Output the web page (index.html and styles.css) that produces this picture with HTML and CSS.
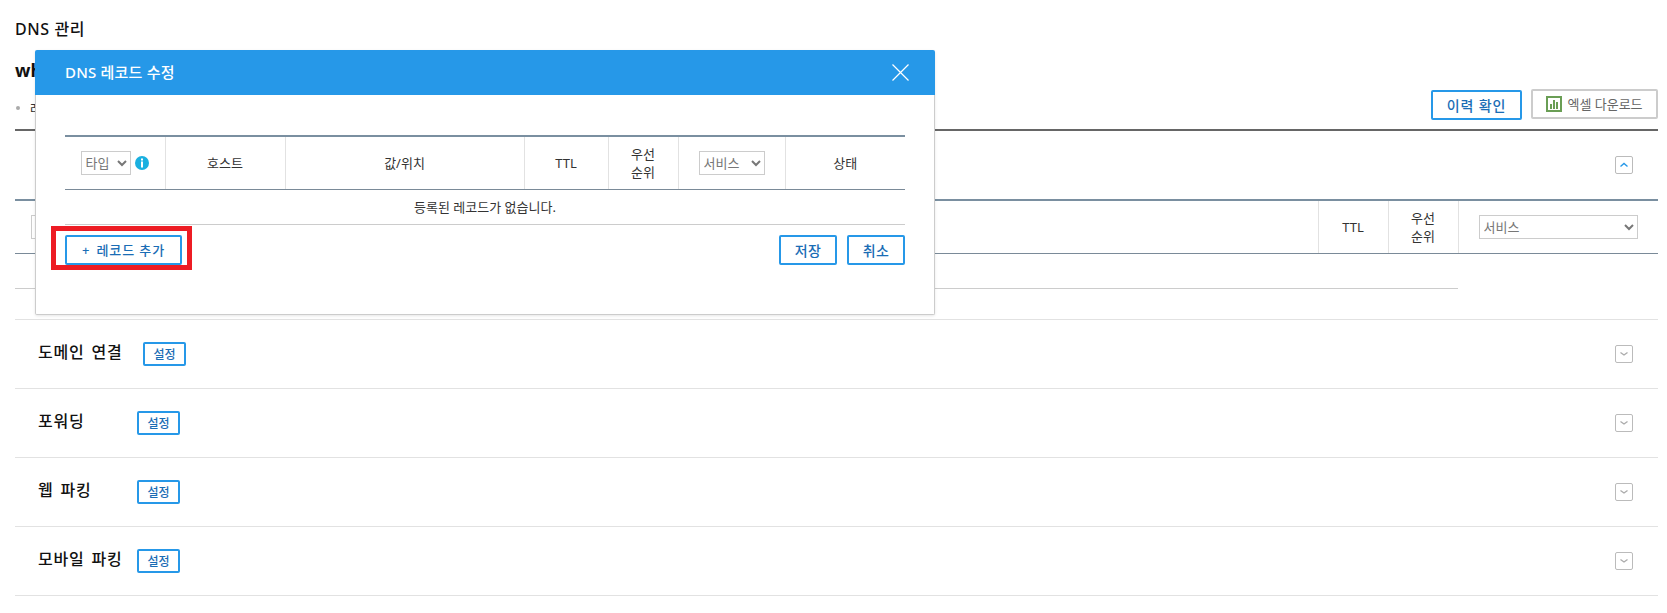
FILE: index.html
```html
<!DOCTYPE html>
<html lang="ko">
<head>
    <meta charset="UTF-8">
    <meta name="viewport" content="width=device-width, initial-scale=1.0">
    <title>DNS 관리</title>
    <link rel="stylesheet" href="styles.css">
</head>
<body>
    <div class="page">
        <h1 class="page-title">DNS 관리</h1>
        <h2 class="domain-name">whois</h2>
        <div class="toolbar">
            <p class="note">레코드를 확인하고 수정할 수 있습니다.</p>
            <div class="toolbar-buttons">
                <button class="btn btn-history">이력 확인</button>
                <button class="btn-excel">
                    <svg class="excel-icon" width="16" height="16" viewBox="0 0 16 16">
                        <rect x="1" y="1" width="14" height="14" fill="#fff" stroke="#6a9e55" stroke-width="2"/>
                        <rect x="4" y="8" width="2" height="5" fill="#6a9e55"/>
                        <rect x="7" y="4" width="2" height="9" fill="#6a9e55"/>
                        <rect x="10" y="6" width="2" height="7" fill="#6a9e55"/>
                    </svg>
                    엑셀 다운로드
                </button>
            </div>
        </div>

        <div class="section-open">
            <div class="section-open-head">
                <span class="toggle toggle-up">
                    <svg width="12" height="8" viewBox="0 0 12 8"><path d="M2.5 5.5 L6 2.5 L9.5 5.5" fill="none" stroke="#2698e8" stroke-width="1.4"/></svg>
                </span>
            </div>
            <table class="record-table">
                <colgroup>
                    <col>
                    <col class="col-70">
                    <col class="col-70">
                    <col class="col-200">
                </colgroup>
                <tr>
                    <th class="cell-left"><input class="filter-input" type="text"></th>
                    <th>TTL</th>
                    <th>우선<br>순위</th>
                    <th class="cell-service">
                        <select class="select select-wide"><option>서비스</option></select>
                    </th>
                </tr>
            </table>
            <div class="empty-row"></div>
        </div>

        <div class="section-row section-row-wide">
            <span class="section-title">도메인 연결</span>
            <button class="btn btn-small">설정</button>
            <span class="toggle"><svg width="12" height="8" viewBox="0 0 12 8"><path d="M2.5 2.5 L6 5 L9.5 2.5" fill="none" stroke="#aaa" stroke-width="1.3"/></svg></span>
        </div>
        <div class="section-row">
            <span class="section-title">포워딩</span>
            <button class="btn btn-small">설정</button>
            <span class="toggle"><svg width="12" height="8" viewBox="0 0 12 8"><path d="M2.5 2.5 L6 5 L9.5 2.5" fill="none" stroke="#aaa" stroke-width="1.3"/></svg></span>
        </div>
        <div class="section-row">
            <span class="section-title">웹 파킹</span>
            <button class="btn btn-small">설정</button>
            <span class="toggle"><svg width="12" height="8" viewBox="0 0 12 8"><path d="M2.5 2.5 L6 5 L9.5 2.5" fill="none" stroke="#aaa" stroke-width="1.3"/></svg></span>
        </div>
        <div class="section-row">
            <span class="section-title">모바일 파킹</span>
            <button class="btn btn-small">설정</button>
            <span class="toggle"><svg width="12" height="8" viewBox="0 0 12 8"><path d="M2.5 2.5 L6 5 L9.5 2.5" fill="none" stroke="#aaa" stroke-width="1.3"/></svg></span>
        </div>
    </div>

    <!-- 레코드 수정 팝업 -->
    <div class="modal">
        <div class="modal-head">
            <span class="modal-title">DNS 레코드 수정</span>
            <svg class="modal-close" width="17" height="17" viewBox="0 0 17 17">
                <path d="M0.5 0.5 L16.5 16.5 M16.5 0.5 L0.5 16.5" stroke="#fff" stroke-width="1.2"/>
            </svg>
        </div>
        <div class="modal-body">
            <table class="modal-table">
                <colgroup>
                    <col class="col-type">
                    <col class="col-host">
                    <col class="col-value">
                    <col class="col-ttl">
                    <col class="col-priority">
                    <col class="col-service">
                    <col class="col-status">
                </colgroup>
                <tr>
                    <th>
                        <span class="type-cell">
                            <select class="select select-type"><option>타입</option></select>
                            <svg width="14" height="14" viewBox="0 0 14 14">
                                <circle cx="7" cy="7" r="7" fill="#1ab0e0"/>
                                <rect x="6" y="2.5" width="2" height="2" fill="#fff"/>
                                <rect x="6" y="5.5" width="2" height="6" fill="#fff"/>
                            </svg>
                        </span>
                    </th>
                    <th>호스트</th>
                    <th>값/위치</th>
                    <th>TTL</th>
                    <th>우선<br>순위</th>
                    <th><select class="select select-service"><option>서비스</option></select></th>
                    <th>상태</th>
                </tr>
                <tr>
                    <td colspan="7" class="empty-cell">등록된 레코드가 없습니다.</td>
                </tr>
            </table>
            <div class="modal-foot">
                <button class="btn btn-add"><span class="plus">+</span> 레코드 추가</button>
                <div class="modal-actions">
                    <button class="btn btn-action">저장</button>
                    <button class="btn btn-action">취소</button>
                </div>
                <div class="annotation"></div>
            </div>
        </div>
    </div>
</body>
</html>
```

FILE: styles.css
```css
* {
    box-sizing: border-box;
}
body {
    margin: 0;
    font-family: "Noto Sans", "Noto Sans CJK KR", sans-serif;
    font-size: 13px;
    color: #333;
    background: #fff;
}
button, select, input {
    font-family: inherit;
}
.page {
    padding: 0 9px 0 15px;
}
.page-title {
    margin: 0;
    padding-top: 18px;
    font-size: 16px;
    line-height: 22px;
    letter-spacing: 0.6px;
    font-weight: 500;
    color: #111;
}
.domain-name {
    margin: 18px 0 0;
    font-size: 18px;
    line-height: 24px;
    font-weight: 700;
    color: #111;
}
.toolbar {
    display: flex;
    justify-content: space-between;
    align-items: flex-start;
    height: 31px;
    margin: 7px 0 9px;
}
.note {
    margin: 10px 0 0;
    padding-left: 15px;
    font-size: 13px;
    line-height: 18px;
    position: relative;
}
.note::before {
    content: "";
    position: absolute;
    left: 1px;
    top: 7px;
    width: 4px;
    height: 4px;
    border-radius: 50%;
    background: #aaa;
}
.toolbar-buttons {
    display: flex;
    gap: 9px;
}
.btn {
    background: #fff;
    border: 2px solid #2698e8;
    border-radius: 2px;
    color: #1a6db5;
    font-weight: 500;
    padding: 0;
    cursor: pointer;
}
.btn-history {
    width: 91px;
    height: 30px;
    margin-top: 1px;
    font-size: 14px;
    letter-spacing: 0.9px;
}
.btn-excel {
    display: flex;
    align-items: center;
    justify-content: center;
    gap: 5px;
    width: 127px;
    height: 30px;
    padding: 0 0 2px;
    background: #fff;
    border: 2px solid #ccc;
    border-radius: 2px;
    color: #666;
    font-size: 13px;
}
.excel-icon {
    margin-top: 2px;
}
.section-open {
    border-top: 2px solid #666;
}
.section-open-head {
    display: flex;
    justify-content: flex-end;
    align-items: center;
    height: 68px;
    padding-right: 25px;
}
.toggle {
    display: flex;
    align-items: center;
    justify-content: center;
    width: 18px;
    height: 18px;
    border: 1px solid #bbb;
    border-radius: 2px;
    background: #fff;
}
.record-table {
    width: 100%;
    border-collapse: collapse;
    table-layout: fixed;
    border-top: 2px solid #7a8fa0;
}
.col-70 {
    width: 70px;
}
.col-200 {
    width: 200px;
}
.record-table th {
    height: 53px;
    padding: 0;
    font-size: 13px;
    line-height: 18px;
    font-weight: 400;
    color: #333;
    border-left: 1px solid #e2e2e2;
    border-bottom: 1px solid #7a8a98;
}
.record-table th.cell-left {
    border-left: none;
    text-align: left;
    padding-left: 16px;
}
.filter-input {
    width: 200px;
    height: 24px;
    border: 1px solid #ccc;
}
.cell-service {
    text-align: left;
    padding-left: 20px !important;
}
.select {
    height: 24px;
    padding: 0;
    background: #fff;
    border: 1px solid #ccc;
    border-radius: 0;
    color: #777;
    font-size: 13px;
}
.select-wide {
    width: 159px;
}
.select-type {
    width: 50px;
}
.select-service {
    width: 66px;
}
.empty-row {
    width: 1443px;
    height: 35px;
    border-bottom: 1px solid #ccc;
}
.section-open + .section-row {
    margin-top: 30px;
    border-top: 1px solid #e2e2e2;
    height: 70px;
}
.section-row {
    display: flex;
    align-items: center;
    height: 69px;
    padding: 0 25px 0 23px;
    border-bottom: 1px solid #e2e2e2;
}
.section-title {
    width: 99px;
    padding-bottom: 4px;
    font-size: 16px;
    line-height: 22px;
    letter-spacing: 0.8px;
    word-spacing: 2px;
    font-weight: 500;
    color: #111;
}
.section-row-wide .section-title {
    width: 105px;
}
.btn-small {
    width: 43px;
    height: 24px;
    font-size: 12px;
}
.section-row .toggle {
    margin-left: auto;
}

.modal {
    position: absolute;
    left: 35px;
    top: 50px;
    width: 900px;
    height: 265px;
    display: flex;
    flex-direction: column;
    border-radius: 2px;
    background: #fff;
    box-shadow: 0 1px 3px rgba(0,0,0,0.1);
}
.modal-head {
    display: flex;
    justify-content: space-between;
    align-items: center;
    flex: none;
    height: 45px;
    padding: 0 26px 0 30px;
    background: #2698e8;
    border-radius: 2px 2px 0 0;
}
.modal-title {
    color: #fff;
    font-size: 15px;
    letter-spacing: 0.2px;
    font-weight: 500;
    padding-bottom: 2px;
}
.modal-body {
    flex: 1;
    padding: 40px 29px 0;
    border: 1px solid #ccc;
    border-top: none;
    border-radius: 0 0 2px 2px;
}
.modal-table {
    width: 840px;
    border-collapse: collapse;
    table-layout: fixed;
    border-top: 2px solid #7a8fa0;
}
.col-type { width: 100px; }
.col-host { width: 120px; }
.col-value { width: 239px; }
.col-ttl { width: 84px; }
.col-priority { width: 70px; }
.col-service { width: 107px; }
.col-status { width: 120px; }
.modal-table th {
    height: 53px;
    padding: 0;
    font-size: 13px;
    line-height: 18px;
    font-weight: 400;
    color: #333;
    border-left: 1px solid #e2e2e2;
    border-bottom: 1px solid #7a8a98;
}
.modal-table th:first-child {
    border-left: none;
}
.type-cell {
    display: flex;
    align-items: center;
    justify-content: flex-end;
    gap: 4px;
    padding-right: 16px;
}
.empty-cell {
    height: 35px;
    padding: 0;
    text-align: center;
    font-size: 13px;
    color: #333;
    border-bottom: 1px solid #ccc;
}
.modal-foot {
    position: relative;
    display: flex;
    justify-content: space-between;
    margin-top: 10px;
}
.btn-add {
    width: 117px;
    height: 30px;
    font-size: 13px;
    letter-spacing: 0.9px;
}
.plus {
    margin-right: 2px;
}
.modal-actions {
    display: flex;
    gap: 10px;
}
.btn-action {
    width: 58px;
    height: 30px;
    font-size: 14px;
    letter-spacing: 0.4px;
}
.annotation {
    position: absolute;
    left: -14px;
    top: -9px;
    width: 141px;
    height: 44px;
    border: 5px solid #ed1c24;
}
```
